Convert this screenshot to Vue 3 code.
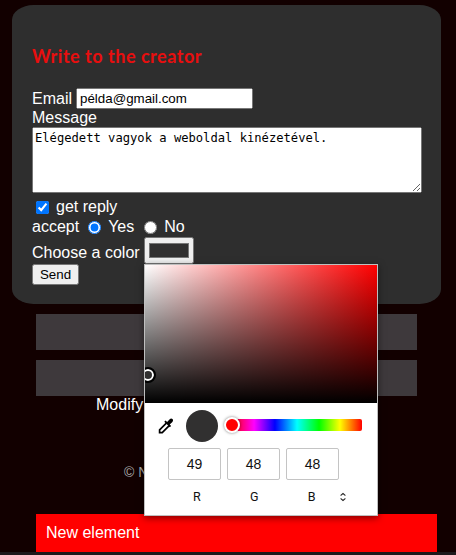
<script setup>
import { ref } from 'vue'

const email = ref('példa@gmail.com')
const message = ref('Elégedett vagyok a weboldal kinézetével.')
const reply = ref(true)
const accept = ref('yes')
const color = ref('#313030')
const channels = [
  { name: 'R', value: 49 },
  { name: 'G', value: 48 },
  { name: 'B', value: 48 },
]
</script>

<template>
  <div class="page">
    <form class="card" @submit.prevent>
      <h2>Write to the creator</h2>
      <label class="row email">Email <input v-model="email" type="text" /></label>
      <label class="row message" for="msg">Message</label>
      <textarea id="msg" v-model="message" spellcheck="false"></textarea>
      <label class="row reply"><input v-model="reply" type="checkbox" />get reply</label>
      <div class="row accept">
        accept
        <label><input v-model="accept" type="radio" value="yes" />Yes</label>
        <label><input v-model="accept" type="radio" value="no" />No</label>
      </div>
      <label class="row color"><span>Choose a color</span><input v-model="color" type="color" /></label>
      <button class="send">Send</button>
    </form>

    <div class="bar"></div>
    <div class="bar"></div>
    <div class="modify">Modify</div>
    <footer>© N</footer>
    <div class="new">New element</div>
    <div class="bottom"></div>

    <div class="picker">
      <div class="spectrum"><span class="ring"></span></div>
      <div class="tools">
        <svg class="dropper" width="18" height="18" viewBox="0 0 18 18">
          <path d="M9.6 5.9 2.6 12.9V15.7H5.2L12.2 8.6" fill="#fff" stroke="#000" stroke-width="1.7" />
          <path d="M7.3 4.8 8.6 3.5l1.5 1.4 2.6-2.7c.9-.9 2-.9 2.8-.1s.8 1.9-.1 2.8l-2.7 2.6 1.4 1.5-1.3 1.3z" fill="#000" />
        </svg>
        <span class="preview"></span>
        <div class="hue"><span class="knob"></span></div>
      </div>
      <div class="values">
        <span v-for="c in channels" :key="c.name">{{ c.value }}</span>
      </div>
      <div class="names">
        <span v-for="c in channels" :key="c.name">{{ c.name }}</span>
        <svg class="switch" width="8" height="10" viewBox="0 0 8 10" fill="none" stroke="#222" stroke-width="1.1">
          <path d="M2 3.7V3.2L4 1.5 6 3.2V3.7M2 6.3V6.8L4 8.5 6 6.8V6.3" />
        </svg>
      </div>
    </div>
  </div>
</template>

<style>
body {
  margin: 0;
  background: #120000;
}
</style>

<style scoped>
.page {
  position: relative;
  box-sizing: border-box;
  width: 456px;
  height: 555px;
  padding-top: 5px;
  overflow: hidden;
  display: flex;
  flex-direction: column;
  background: #120000;
  color: #fff;
  font: 16px/18px "Liberation Sans", Arial, sans-serif;
}
.card {
  box-sizing: border-box;
  width: 429px;
  height: 299px;
  margin-left: 12px;
  padding: 40px 19px 0 20px;
  border-radius: 5%;
  background: #2e2e2e;
  display: flex;
  flex-direction: column;
  align-items: flex-start;
}
h2 {
  margin: 0 0 21px;
  height: 22px;
  font: 700 18px/22px Lato, sans-serif;
  letter-spacing: 0.52px;
  color: #e80e0e;
  white-space: nowrap;
}
input,
textarea,
button {
  margin: 0;
}
.row {
  display: flex;
  align-items: center;
  white-space: nowrap;
}
.email {
  height: 21px;
  gap: 4px;
  line-height: 20px;
}
.email input {
  box-sizing: border-box;
  width: 177px;
  height: 21px;
  font: 13.33px "Liberation Sans", Arial, sans-serif;
}
.message {
  height: 18px;
}
textarea {
  box-sizing: border-box;
  width: 390px;
  height: 66px;
  padding: 2px;
  font: 12.15px/16px "DejaVu Sans Mono", monospace;
}
.reply {
  height: 20px;
  margin-top: 4px;
  padding-left: 4px;
  gap: 7px;
}
.reply input {
  width: 13px;
  height: 13px;
}
.accept {
  height: 20px;
  gap: 9px;
}
.accept label {
  display: flex;
  align-items: center;
  gap: 7px;
}
.accept label + label {
  margin-left: 1px;
}
.accept input {
  width: 13px;
  height: 13px;
}
.color {
  height: 27px;
  gap: 4px;
}
.color span {
  padding-top: 4px;
}
.color input {
  width: 50px;
  height: 27px;
}
.send {
  box-sizing: border-box;
  width: 47px;
  height: 21px;
  padding: 0;
  font: 13.33px "Liberation Sans", Arial, sans-serif;
}
.bar {
  width: 381px;
  height: 36px;
  margin: 10px 0 0 36px;
  background: #3e393c;
}
.modify {
  margin-left: 96px;
  height: 18px;
}
footer {
  margin: 49px 0 0 124px;
  height: 18px;
  font-size: 14px;
  color: #aaa;
}
.new {
  box-sizing: border-box;
  width: 401px;
  height: 38px;
  margin: 33px 0 0 36px;
  padding: 10px;
  background: #f00;
}
.bottom {
  height: 3px;
  background: #1d191c;
}
.picker {
  position: absolute;
  left: 144px;
  top: 264px;
  box-sizing: border-box;
  width: 234px;
  height: 252px;
  border: 1px solid #bfbfbf;
  background: #fff;
  color: #111;
  box-shadow: 0 2px 7px rgba(0, 0, 0, 0.5);
}
.spectrum {
  position: relative;
  height: 138px;
  overflow: hidden;
  background:
    linear-gradient(to bottom, transparent, #000),
    linear-gradient(to right, #fff, #f00);
}
.ring {
  position: absolute;
  left: -3px;
  top: 104px;
  box-sizing: border-box;
  width: 12px;
  height: 12px;
  border: 2px solid #fff;
  border-radius: 50%;
  outline: 2px solid #000;
  background: #313030;
}
.tools {
  display: flex;
  align-items: center;
  height: 45px;
  padding: 0 15px 0 12px;
}
.dropper {
  margin-top: 1px;
}
.preview {
  width: 32px;
  height: 32px;
  margin: 1px 14px 0 11px;
  border-radius: 50%;
  background: #313030;
}
.hue {
  position: relative;
  flex: 1;
  height: 12px;
  margin-top: -1px;
  border-radius: 2px;
  background: linear-gradient(to right, #f00, #f0f 17%, #00f 33%, #0ff 50%, #0f0 67%, #ff0 83%, #f00);
}
.knob {
  position: absolute;
  left: -8px;
  top: -2px;
  box-sizing: border-box;
  width: 16px;
  height: 16px;
  border: 2px solid #fff;
  border-radius: 50%;
  background: #f00;
  box-shadow: 0 0 3px rgba(0, 0, 0, 0.5);
}
.values {
  display: flex;
  gap: 6px;
  padding-left: 23px;
  text-align: center;
}
.values span {
  box-sizing: border-box;
  width: 53px;
  height: 32px;
  border: 1px solid #c4c4c4;
  border-radius: 2px;
  font-size: 14px;
  line-height: 31px;
}
.names {
  display: flex;
  align-items: center;
  margin-top: 8px;
  padding-left: 23px;
  text-align: center;
}
.names span {
  width: 57.5px;
  font: 12.5px/18px Roboto, sans-serif;
}
.switch {
  margin-left: -2px;
}
</style>
